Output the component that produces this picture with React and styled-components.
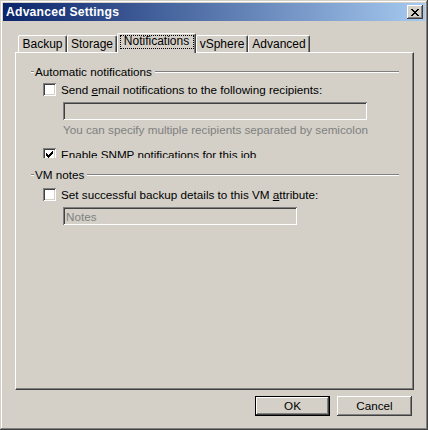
import React from 'react';
import styled, {createGlobalStyle} from 'styled-components';

const GlobalStyle = createGlobalStyle`
  html, body {
    margin: 0;
    padding: 0;
    background: #d4d0c8;
  }
  body {
    font-family: "Liberation Sans", Arial, sans-serif;
    font-size: 11.7px;
    color: #000;
  }
`;

const Window = styled.div`
  box-sizing: border-box;
  width: 428px;
  height: 430px;
  padding: 3px;
  background: #d4d0c8;
  box-shadow: inset -1px -1px #404040, inset 1px 1px #d4d0c8,
    inset -2px -2px #808080, inset 2px 2px #fff;
  display: flex;
  flex-direction: column;
`;

const TitleBar = styled.div`
  height: 18px;
  flex-shrink: 0;
  background: linear-gradient(to right, #0a246a, #a6caf0);
  display: flex;
  align-items: center;
  justify-content: space-between;
  padding: 0 2px 0 3px;
`;

const Title = styled.div`
  color: #fff;
  font-weight: 700;
  font-size: 12.2px;
  letter-spacing: 0.2px;
`;

const CloseButton = styled.div`
  box-sizing: border-box;
  width: 16px;
  height: 14px;
  background: #d4d0c8;
  box-shadow: inset -1px -1px #404040, inset 1px 1px #fff,
    inset -2px -2px #808080, inset 2px 2px #d4d0c8;
  display: flex;
  align-items: center;
  justify-content: center;
  svg {
    display: block;
  }
`;

const Body = styled.div`
  flex: 1;
  display: flex;
  flex-direction: column;
  padding: 12px 11px 0 12px;
`;

const TabStrip = styled.div`
  height: 19px;
  display: flex;
  align-items: flex-end;
  padding-left: 3px;
`;

const Tab = styled.div`
  box-sizing: border-box;
  position: relative;
  z-index: ${p => (p.$active ? 2 : 1)};
  width: ${p => p.$w}px;
  height: ${p => (p.$active ? 20 : 17)}px;
  margin-bottom: ${p => (p.$active ? -1 : 0)}px;
  background: #d4d0c8;
  border-top: 1px solid #fff;
  border-left: 1px solid #fff;
  border-right: 1px solid #404040;
  box-shadow: inset -1px 0 #808080;
  border-radius: 2px 2px 0 0;
  display: flex;
  align-items: ${p => (p.$active ? 'flex-start' : 'center')};
  justify-content: center;
  padding-top: ${p => (p.$active ? 1 : 0)}px;
  font-size: 12px;
`;

const FocusLabel = styled.span`
  box-sizing: border-box;
  width: calc(100% - 3px);
  height: 14px;
  line-height: 12px;
  text-align: center;
  outline: 1px dotted #000;
  outline-offset: -1px;
`;

const Panel = styled.div`
  box-sizing: border-box;
  height: 338px;
  border-top: 1px solid #fff;
  border-left: 1px solid #fff;
  border-right: 1px solid #404040;
  border-bottom: 1px solid #404040;
  box-shadow: inset -1px -1px #808080;
  padding: 12px 14px 0 15px;
  display: flex;
  flex-direction: column;
`;

const GroupHeader = styled.div`
  height: 14px;
  display: flex;
  align-items: center;
  margin-top: ${p => p.$top || 0}px;
`;

const Rule = styled.div`
  height: 0;
  border-top: 1px solid #808080;
  border-bottom: 1px solid #fff;
  width: ${p => (p.$w ? `${p.$w}px` : 'auto')};
  flex: ${p => (p.$w ? '0 0 auto' : '1')};
`;

const GroupLabel = styled.span`
  padding: 0 3px 0 1px;
  line-height: 14px;
  white-space: nowrap;
`;

const CheckRow = styled.div`
  display: flex;
  align-items: center;
  gap: 5px;
  height: 13px;
  margin-left: 12px;
  margin-top: ${p => p.$top || 0}px;
  white-space: nowrap;
`;

const Clip = styled.div`
  height: ${p => p.$h}px;
  overflow: hidden;
  margin-top: ${p => p.$top || 0}px;
  flex-shrink: 0;
`;

const Box = styled.div`
  box-sizing: border-box;
  width: 13px;
  height: 13px;
  flex-shrink: 0;
  background: #fff;
  box-shadow: inset 1px 1px #808080, inset -1px -1px #fff,
    inset 2px 2px #404040, inset -2px -2px #d4d0c8;
  display: flex;
  align-items: center;
  justify-content: center;
  svg {
    display: block;
  }
`;

const Key = styled.span`
  text-decoration: underline;
  text-underline-offset: 1px;
`;

const Field = styled.div`
  box-sizing: border-box;
  width: ${p => p.$w}px;
  height: 18px;
  margin-left: 32px;
  margin-top: ${p => p.$top || 0}px;
  background: #d4d0c8;
  box-shadow: inset 1px 1px #808080, inset -1px -1px #fff,
    inset 2px 2px #404040, inset -2px -2px #d4d0c8;
  padding: 0 3px;
  display: flex;
  align-items: center;
  color: #808080;
`;

const Hint = styled.div`
  margin-left: 32px;
  margin-top: 3px;
  line-height: 14px;
  color: #808080;
  white-space: nowrap;
`;

const ButtonRow = styled.div`
  display: flex;
  justify-content: flex-end;
  gap: 7px;
  margin-top: 6px;
  padding-right: 2px;
`;

const Button = styled.div`
  box-sizing: border-box;
  width: 75px;
  height: 20px;
  display: flex;
  align-items: center;
  justify-content: center;
  padding-bottom: 1px;
  background: #d4d0c8;
  box-shadow: ${p =>
    p.$default
      ? 'inset 0 0 0 1px #000, inset -2px -2px #404040, inset 2px 2px #fff, inset -3px -3px #808080'
      : 'inset -1px -1px #404040, inset 1px 1px #fff, inset -2px -2px #808080, inset 2px 2px #d4d0c8'};
`;

function Check({checked}) {
  return (
    <Box>
      {checked && (
        <svg width="7" height="7" viewBox="0 0 7 7" shapeRendering="crispEdges">
          <path d="M0 2h1v1h1v1h1v-1h1v-1h1v-1h1v-1h1v3h-1v1h-1v1h-1v1h-1v1h-1v-1h-1v-1h-1z" fill="#000" />
        </svg>
      )}
    </Box>
  );
}

const tabs = [
  {name: 'Backup', w: 49},
  {name: 'Storage', w: 50},
  {name: 'Notifications', w: 79, active: true},
  {name: 'vSphere', w: 52},
  {name: 'Advanced', w: 62},
];

export default function App() {
  return (
    <>
      <GlobalStyle />
      <Window>
        <TitleBar>
          <Title>Advanced Settings</Title>
          <CloseButton>
            <svg width="8" height="7" viewBox="0 0 8 7" shapeRendering="crispEdges">
              <path d="M0 0h2v1h1v1h2v-1h1v-1h2v1h-1v1h-1v1h-1v1h1v1h1v1h1v1h-2v-1h-1v-1h-2v1h-1v1h-2v-1h1v-1h1v-1h1v-1h-1v-1h-1v-1h-1z" fill="#000" />
            </svg>
          </CloseButton>
        </TitleBar>
        <Body>
          <TabStrip>
            {tabs.map(t => (
              <Tab key={t.name} $w={t.w} $active={t.active}>
                {t.active ? <FocusLabel>{t.name}</FocusLabel> : t.name}
              </Tab>
            ))}
          </TabStrip>
          <Panel>
            <GroupHeader>
              <Rule $w={3} />
              <GroupLabel>Automatic notifications</GroupLabel>
              <Rule />
            </GroupHeader>
            <CheckRow $top={4}>
              <Check />
              <span>Send <Key>e</Key>mail notifications to the following recipients:</span>
            </CheckRow>
            <Field $w={304} $top={6} />
            <Hint>You can specify multiple recipients separated by semicolon</Hint>
            <Clip $h={10} $top={11}>
              <CheckRow>
                <Check checked />
                <span>Enable SNMP notifications for this job</span>
              </CheckRow>
            </Clip>
            <GroupHeader $top={10}>
              <Rule $w={3} />
              <GroupLabel>VM notes</GroupLabel>
              <Rule />
            </GroupHeader>
            <CheckRow $top={6}>
              <Check />
              <span>Set successful backup details to this VM <Key>a</Key>ttribute:</span>
            </CheckRow>
            <Field $w={234} $top={6}>Notes</Field>
          </Panel>
          <ButtonRow>
            <Button $default>OK</Button>
            <Button>Cancel</Button>
          </ButtonRow>
        </Body>
      </Window>
    </>
  );
}
